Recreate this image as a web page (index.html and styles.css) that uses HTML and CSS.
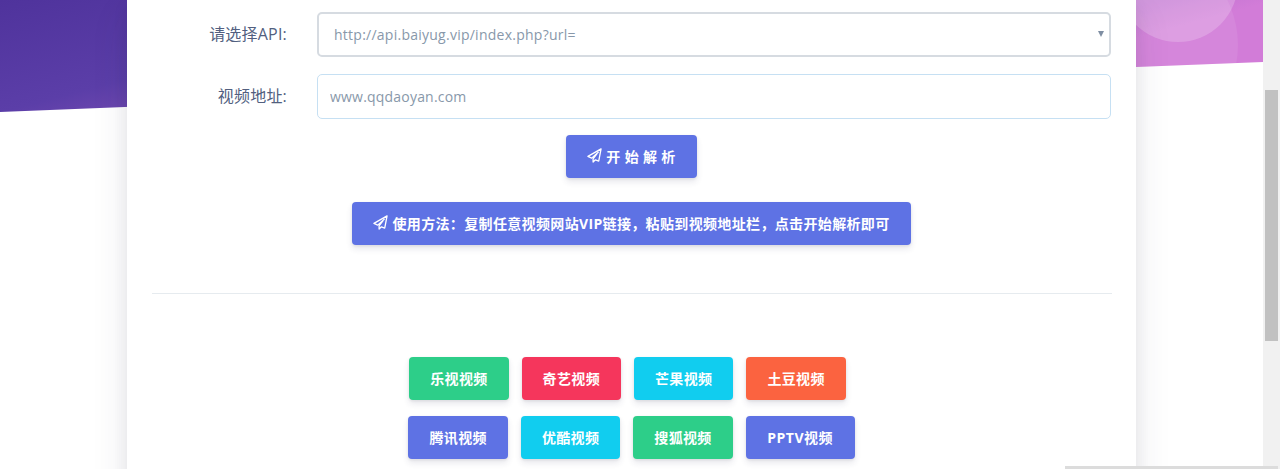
FILE: index.html
```html
<!DOCTYPE html>
<html lang="zh-CN">
<head>
    <meta charset="UTF-8">
    <meta name="viewport" content="width=device-width, initial-scale=1.0">
    <title>VIP视频解析</title>
    <link rel="stylesheet" href="styles.css">
</head>
<body>

    <div class="page">
        <div class="main">
            <div class="hero">
                <span class="circle circle-big"></span>
                <span class="circle circle-small"></span>
            </div>

            <div class="card">
                <div class="form-row">
                    <label class="form-label">请选择API:</label>
                    <div class="select-wrap">
                        <select class="field field-select">
                            <option>http://api.baiyug.vip/index.php?url=</option>
                        </select>
                    </div>
                </div>
                <div class="form-row">
                    <label class="form-label">视频地址:</label>
                    <input class="field field-input" type="text" placeholder="www.qqdaoyan.com">
                </div>

                <div class="center start-row">
                    <button class="btn btn-primary btn-start">
                        <svg class="plane" viewBox="0 0 16 16"><path d="M15 1 1 9l4 1.800L12 4.500 6.500 11.500V15L9 12.600 12.500 14Z"/></svg>
                        <span>开 始 解 析</span>
                    </button>
                </div>
                <div class="center tip-row">
                    <button class="btn btn-primary btn-tip">
                        <svg class="plane" viewBox="0 0 16 16"><path d="M15 1 1 9l4 1.800L12 4.500 6.500 11.500V15L9 12.600 12.500 14Z"/></svg>
                        <span>使用方法：复制任意视频网站VIP链接，粘贴到视频地址栏，点击开始解析即可</span>
                    </button>
                </div>

                <hr class="divider">

                <div class="links links-first">
                    <a class="btn btn-success">乐视视频</a>
                    <a class="btn btn-danger">奇艺视频</a>
                    <a class="btn btn-info">芒果视频</a>
                    <a class="btn btn-warning">土豆视频</a>
                </div>
                <div class="links">
                    <a class="btn btn-primary">腾讯视频</a>
                    <a class="btn btn-info">优酷视频</a>
                    <a class="btn btn-success">搜狐视频</a>
                    <a class="btn btn-primary btn-wide">PPTV视频</a>
                </div>
            </div>
        </div>

        <div class="scrollbar">
            <div class="scrollbar-thumb"></div>
        </div>
        <div class="bottom-bar"></div>
    </div>

</body>
</html>
```

FILE: styles.css
```css
* {
    box-sizing: border-box;
}
html, body {
    margin: 0;
    height: 469px;
    overflow: hidden;
}
body {
    font-family: "Open Sans", "Noto Sans CJK SC", sans-serif;
    background-color: #fff;
    color: #525f7f;
}
.page {
    position: relative;
    display: flex;
    height: 469px;
    overflow: hidden;
}
.main {
    position: relative;
    flex: 1;
    padding-left: 127px;
    overflow: hidden;
}
.hero {
    position: absolute;
    top: 0;
    left: 0;
    right: 0;
    height: 112px;
    background: linear-gradient(165deg, #4f339c 0%, #5b3ea8 25%, #d27cd8 76%);
    clip-path: polygon(0 0, 100% 0, 100% 62px, 0 112px);
}
.circle {
    position: absolute;
    border-radius: 50%;
    background-color: rgba(255, 255, 255, 0.08);
}
.circle-big {
    left: 1038px;
    top: -55px;
    width: 200px;
    height: 200px;
}
.circle-small {
    left: 1118px;
    top: -78px;
    width: 120px;
    height: 120px;
    background-color: rgba(255, 255, 255, 0.2);
}
.card {
    position: relative;
    width: 1009px;
    height: 520px;
    padding: 12px 25px 0;
    background-color: #fff;
    box-shadow: 0 15px 35px rgba(50, 50, 93, 0.1), 0 5px 15px rgba(0, 0, 0, 0.07);
}
.form-row {
    display: flex;
    align-items: center;
    margin-bottom: 17px;
}
.form-label {
    width: 135px;
    margin-right: 30px;
    padding-bottom: 3px;
    font-size: 16px;
    letter-spacing: 0.2px;
    text-align: right;
}
.select-wrap {
    position: relative;
    flex: 1;
}
.select-wrap::after {
    content: "";
    position: absolute;
    top: 19px;
    right: 7px;
    border-left: 3px solid transparent;
    border-right: 3px solid transparent;
    border-top: 6px solid #7f8ea3;
}
.field {
    display: block;
    width: 794px;
    height: 45px;
    font-family: inherit;
    font-size: 14px;
    color: #8898aa;
    background-color: #fff;
    border-radius: 5px;
    outline: none;
}
.field-select {
    padding: 0 15px;
    letter-spacing: 0.25px;
    border: 2px solid #d6dbe1;
    appearance: none;
}
.field-input {
    padding: 0 12px;
    letter-spacing: 0.2px;
    border: 1px solid #c6e0f3;
}
.field-input::placeholder {
    color: #8898aa;
    opacity: 1;
}
.center {
    display: flex;
    justify-content: center;
}
.start-row {
    margin-top: -1px;
}
.tip-row {
    margin-top: 24px;
}
.btn {
    display: flex;
    align-items: center;
    justify-content: center;
    height: 43px;
    padding: 0 21px 2px;
    font-family: inherit;
    font-size: 14px;
    font-weight: 700;
    letter-spacing: 0.35px;
    color: #fff;
    border: none;
    border-radius: 4px;
    box-shadow: 0 4px 6px rgba(50, 50, 93, 0.11), 0 1px 3px rgba(0, 0, 0, 0.08);
}
.btn-primary {
    background-color: #5e72e4;
}
.btn-success {
    background-color: #2dce89;
}
.btn-danger {
    background-color: #f5365c;
}
.btn-info {
    background-color: #11cdef;
}
.btn-warning {
    background-color: #fb6340;
}
.btn-start {
    width: 131px;
    padding: 0 0 2px;
    white-space: pre;
}
.btn-tip {
    width: 559px;
    padding: 0 0 2px;
}
.btn-wide {
    padding: 0 21.500px 2px;
    letter-spacing: 0.5px;
}
.plane {
    width: 15px;
    height: 15px;
    margin-right: 4px;
    fill: none;
    stroke: #fff;
    stroke-width: 1.4;
    stroke-linejoin: round;
}
.divider {
    width: 960px;
    height: 1px;
    margin: 48px 0 63px;
    background-color: #e6ebef;
    border: none;
}
.links {
    display: flex;
    justify-content: center;
    gap: 13px;
    margin-bottom: 16px;
}
.links-first {
    padding-right: 8px;
}
.scrollbar {
    position: relative;
    flex: 0 0 17px;
    background-color: #f1f1f1;
    padding: 90px 2px 0;
}
.scrollbar-thumb {
    height: 251px;
    background-color: #c1c1c1;
}
.bottom-bar {
    position: absolute;
    left: 1065px;
    bottom: 0;
    width: 213px;
    height: 3px;
    background-color: #dcdcdc;
}
```
